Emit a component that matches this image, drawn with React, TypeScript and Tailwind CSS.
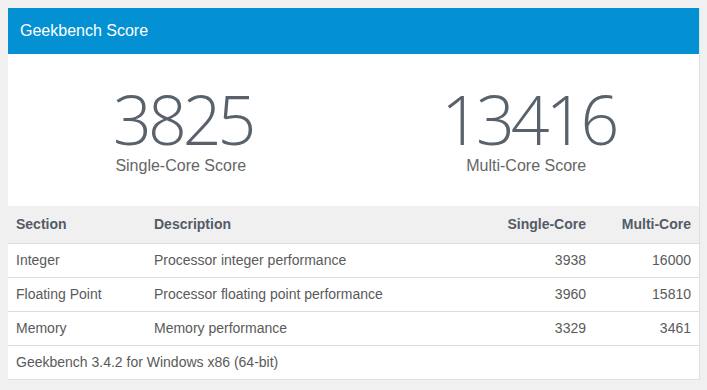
import React from "react";

const rows = [
  { section: "Integer", desc: "Processor integer performance", single: "3938", multi: "16000" },
  { section: "Floating Point", desc: "Processor floating point performance", single: "3960", multi: "15810" },
  { section: "Memory", desc: "Memory performance", single: "3329", multi: "3461" },
];

const ScoreBlock = ({ value, label }: { value: string; label: string }) => (
  <div className="flex flex-col items-center">
    <div className="font-['Open_Sans',sans-serif] font-light text-[68px] leading-none tracking-[-4px] pl-[4px] text-[#59616b]">
      {value}
    </div>
    <div className="mt-[3px] text-[16px] leading-5 text-[#666]">{label}</div>
  </div>
);

const App = () => {
  return (
    <div className="min-h-screen bg-[#f0f0f0] pl-2 pt-2 font-['Liberation_Sans',Arial,sans-serif]">
      <div className="w-[692px] bg-white border-r border-b border-[#e0e0e0]">
        <div className="h-[46px] bg-[#0391d3] flex items-center px-3 text-white text-[16px]">
          Geekbench Score
        </div>

        <div className="h-[152px] grid grid-cols-2 pt-[31px]">
          <ScoreBlock value="3825" label="Single-Core Score" />
          <ScoreBlock value="13416" label="Multi-Core Score" />
        </div>

        <div className="text-[14px] text-[#5a5a5a]">
          <div className="grid grid-cols-[138px_328px_120px_105px] h-[38px] items-center bg-[#f0f0f0] border-b border-[#dddddd] font-bold text-[#545b66]">
            <div className="pl-2">Section</div>
            <div className="pl-2">Description</div>
            <div className="pr-2 text-right">Single-Core</div>
            <div className="pr-2 text-right">Multi-Core</div>
          </div>
          {rows.map((r) => (
            <div
              key={r.section}
              className="grid grid-cols-[138px_328px_120px_105px] h-[34px] items-center border-b border-[#dddddd]"
            >
              <div className="pl-2">{r.section}</div>
              <div className="pl-2">{r.desc}</div>
              <div className="pr-2 text-right">{r.single}</div>
              <div className="pr-2 text-right">{r.multi}</div>
            </div>
          ))}
          <div className="h-[33px] flex items-center pl-2">Geekbench 3.4.2 for Windows x86 (64-bit)</div>
        </div>
      </div>
    </div>
  );
};

export default App;
